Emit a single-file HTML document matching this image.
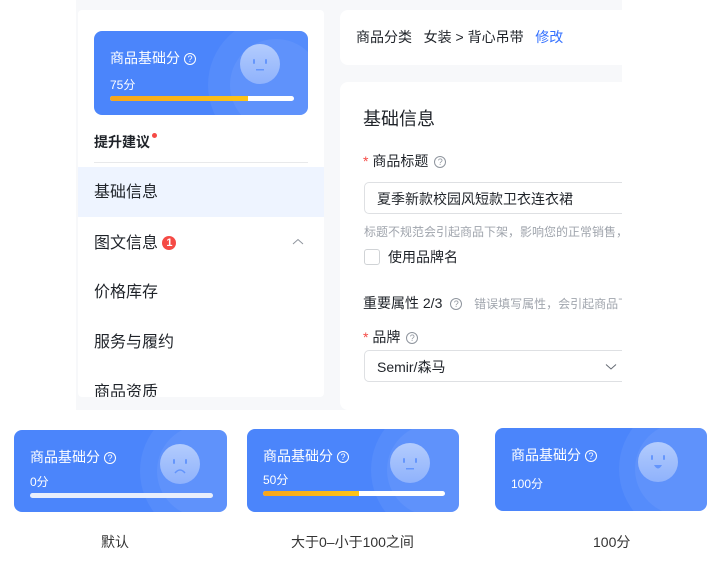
<!DOCTYPE html>
<html><head><meta charset="utf-8"><style>
*{margin:0;padding:0;box-sizing:border-box}
body{width:724px;height:568px;background:#fff;position:relative;overflow:hidden;font-family:"Liberation Sans","Noto Sans CJK SC",sans-serif;color:#1f2329}
.abs{position:absolute}
.bg{left:76px;top:0;width:546px;height:410px;background:#f7f8fa}
.left{left:78px;top:10px;width:246px;height:387px;background:#fff;overflow:hidden;border-radius:4px}
.card{position:absolute;background:#4b85fb;border-radius:8px;overflow:hidden;color:#fff}
.card .t{position:absolute;left:16px;top:17px;font-size:14px;font-weight:400;white-space:nowrap}
.q{display:inline-block;width:12px;height:12px;border:1px solid currentColor;border-radius:50%;font-size:9px;line-height:10px;text-align:center;vertical-align:1px;margin-left:4px}
.card .s{position:absolute;left:16px;font-size:12px}
.bar{position:absolute;left:16px;height:5px;border-radius:3px;background:#fff;overflow:hidden}
.bar i{display:block;height:100%;background:linear-gradient(90deg,#f7a51b,#fcc417)}
.ring1{position:absolute;width:136px;height:136px;border-radius:50%;background:rgba(255,255,255,.06)}
.ring2{position:absolute;width:92px;height:92px;border-radius:50%;background:rgba(255,255,255,.06)}
.face{position:absolute;width:40px;height:40px;border-radius:50%;background:linear-gradient(#b3ccfd,#8fb2fc)}
.nav{position:absolute;left:16px;font-size:16px;color:#1f2329}
.rc{background:#fff;border-radius:8px}
.lbl{position:absolute;font-size:14px;color:#333}
.gray{color:#8f959e}
.clip{position:absolute;left:0;top:0;width:622px;height:420px;overflow:hidden}
</style></head><body>
<div class="abs bg"></div>
<div class="abs left">
  <div class="card" style="left:16px;top:21px;width:214px;height:84px">
    <div class="ring1" style="left:114px;top:-14px"></div><div class="ring2" style="left:136px;top:8px"></div>
    <div class="face" style="left:146px;top:13px"><svg width="40" height="40"><rect x="13" y="15" width="2" height="5" rx="1" fill="#4b85fb" opacity=".7"/><rect x="25" y="15" width="2" height="5" rx="1" fill="#4b85fb" opacity=".7"/><rect x="16" y="25" width="8" height="1.5" fill="#4b85fb" opacity=".7"/></svg></div>
    <div class="t">商品基础分<span class="q">?</span></div>
    <div class="s" style="top:45px">75分</div>
    <div class="bar" style="top:65px;width:184px"><i style="width:75%"></i></div>
  </div>
  <div class="abs" style="left:16px;top:122px;font-size:14px;font-weight:600">提升建议<span style="position:absolute;right:-7px;top:1px;width:5px;height:5px;border-radius:50%;background:#f54a45"></span></div>
  <div class="abs" style="left:16px;top:152px;width:214px;height:1px;background:#e8e9eb"></div>
  <div class="abs" style="left:0;top:157px;width:246px;height:50px;background:#eef4ff"></div>
  <div class="nav" style="top:168px">基础信息</div>
  <div class="nav" style="top:219px">图文信息 <span style="display:inline-block;width:14px;height:14px;border-radius:50%;background:#f54a45;color:#fff;font-size:11px;line-height:14px;text-align:center;vertical-align:2px;font-weight:bold">1</span></div>
  <svg class="abs" style="left:214px;top:228px" width="12" height="8"><path d="M1 6L6 1.5L11 6" stroke="#8f959e" fill="none"/></svg>
  <div class="nav" style="top:268px">价格库存</div>
  <div class="nav" style="top:318px">服务与履约</div>
  <div class="nav" style="top:368px">商品资质</div>
</div>
<div class="clip">
<div class="abs rc" style="left:340px;top:10px;width:300px;height:55px"></div>
<div class="abs" style="left:356px;top:27px;font-size:14px;white-space:nowrap">商品分类 &nbsp;&nbsp;女装 &gt; 背心吊带 &nbsp;&nbsp;<span style="color:#3370ff">修改</span></div>
<div class="abs rc" style="left:340px;top:82px;width:300px;height:328px;overflow:hidden">
  <div class="abs" style="left:23px;top:23px;font-size:18px">基础信息</div>
  <div class="abs" style="left:23px;top:69px;font-size:14px;color:#1f2329"><span style="color:#f54a45">*</span> 商品标题 <span class="q gray" style="margin-left:2px">?</span></div>
  <div class="abs" style="left:24px;top:100px;width:290px;height:32px;border:1px solid #dee0e3;border-radius:5px;font-size:14px;padding:6px 12px">夏季新款校园风短款卫衣连衣裙</div>
  <div class="abs gray" style="left:24px;top:141px;font-size:12px;white-space:nowrap;color:#a0a5ad">标题不规范会引起商品下架，影响您的正常销售，</div>
  <div class="abs" style="left:24px;top:167px;width:16px;height:16px;border:1px solid #d0d3d6;border-radius:3px"></div>
  <div class="abs" style="left:48px;top:165px;font-size:14px">使用品牌名</div>
  <div class="abs" style="left:23px;top:211px;font-size:14px;white-space:nowrap">重要属性 2/3 <span class="q gray">?</span> <span style="color:#a0a5ad;font-size:12px;margin-left:8px">错误填写属性，会引起商品下</span></div>
  <div class="abs" style="left:23px;top:245px;font-size:14px"><span style="color:#f54a45">*</span> 品牌 <span class="q gray" style="margin-left:2px">?</span></div>
  <div class="abs" style="left:24px;top:268px;width:290px;height:32px;border:1px solid #dee0e3;border-radius:5px;font-size:14px;padding:6px 12px">Semir/森马</div>
  <svg class="abs" style="left:265px;top:281px" width="12" height="8"><path d="M1 1.5L6 6L11 1.5" stroke="#646a73" fill="none"/></svg>
</div>
</div>
<!-- bottom cards -->
<div class="card" style="left:14px;top:430px;width:213px;height:82px">
  <div class="ring1" style="left:126px;top:-27px"></div><div class="ring2" style="left:143px;top:-5px"></div>
  <div class="face" style="left:146px;top:14px"><svg width="40" height="40"><rect x="13" y="15" width="2" height="5" rx="1" fill="#4b85fb" opacity=".7"/><rect x="25" y="15" width="2" height="5" rx="1" fill="#4b85fb" opacity=".7"/><path d="M15 29Q20 23 25 29" stroke="#4b85fb" stroke-opacity=".7" stroke-width="1.5" fill="none"/></svg></div>
  <div class="t">商品基础分<span class="q">?</span></div>
  <div class="s" style="top:43px">0分</div>
  <div class="bar" style="top:63px;width:183px;background:#e8eefc"></div>
</div>
<div class="card" style="left:247px;top:429px;width:212px;height:83px">
  <div class="ring1" style="left:124px;top:-27px"></div><div class="ring2" style="left:140px;top:-5px"></div>
  <div class="face" style="left:143px;top:14px"><svg width="40" height="40"><rect x="13" y="15" width="2" height="5" rx="1" fill="#4b85fb" opacity=".7"/><rect x="25" y="15" width="2" height="5" rx="1" fill="#4b85fb" opacity=".7"/><rect x="16" y="25" width="8" height="1.5" fill="#4b85fb" opacity=".7"/></svg></div>
  <div class="t">商品基础分<span class="q">?</span></div>
  <div class="s" style="top:42px">50分</div>
  <div class="bar" style="top:62px;width:182px"><i style="width:53%"></i></div>
</div>
<div class="card" style="left:495px;top:428px;width:212px;height:83px">
  <div class="ring1" style="left:124px;top:-27px"></div><div class="ring2" style="left:140px;top:-5px"></div>
  <div class="face" style="left:143px;top:14px"><svg width="40" height="40"><rect x="13" y="13" width="2" height="5" rx="1" fill="#4b85fb" opacity=".7"/><rect x="25" y="13" width="2" height="5" rx="1" fill="#4b85fb" opacity=".7"/><path d="M16 23Q20 30 24 23Z" fill="#4b85fb" fill-opacity=".7"/></svg></div>
  <div class="t">商品基础分<span class="q">?</span></div>
  <div class="s" style="top:47px">100分</div>
</div>
<div class="lbl" style="left:101px;top:532px">默认</div>
<div class="lbl" style="left:291px;top:532px">大于0–小于100之间</div>
<div class="lbl" style="left:593px;top:532px">100分</div>
</body></html>
